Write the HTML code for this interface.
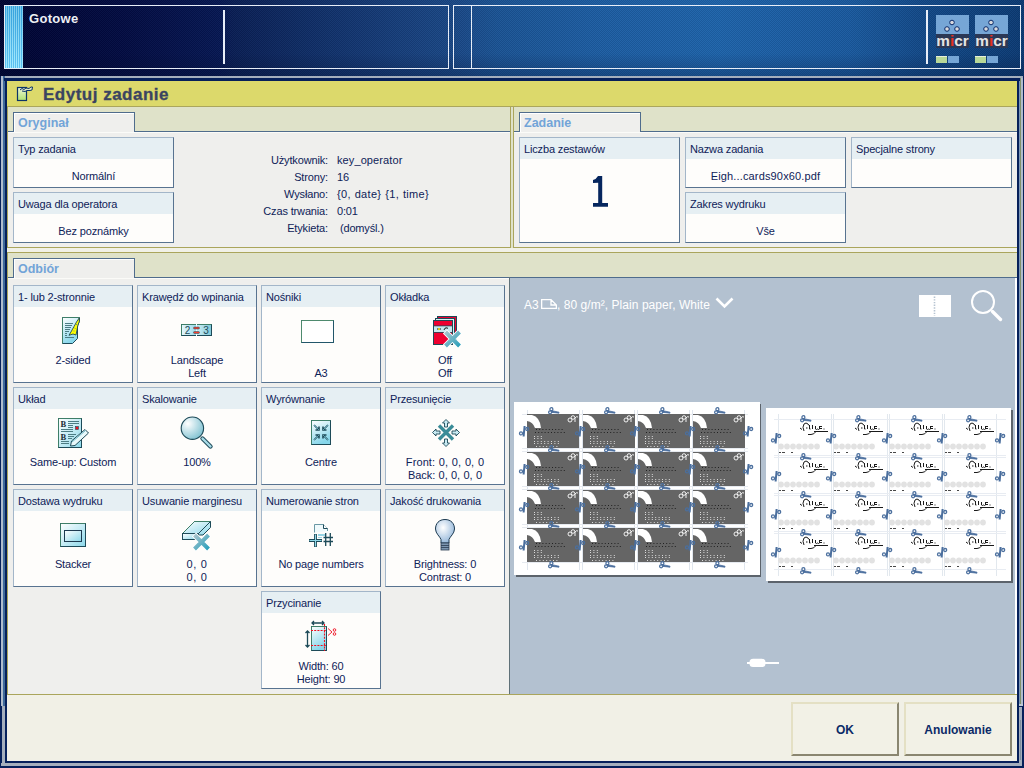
<!DOCTYPE html><html><head><meta charset="utf-8"><style>
*{margin:0;padding:0;box-sizing:border-box}
html,body{width:1024px;height:768px;overflow:hidden;background:#010a3a;font-family:"Liberation Sans",sans-serif;}
.a{position:absolute}
svg{position:absolute;overflow:visible}
.wl{position:absolute;background:#e6ecf6}
.t{position:absolute;font-size:11px;color:#0e2258;white-space:nowrap;line-height:13px;letter-spacing:-0.15px}
.c{text-align:center}
.box{position:absolute;border:1px solid;border-color:#a3b6c9 #587390 #587390 #a3b6c9;background:#fefdfb}
.hd{position:absolute;left:0;top:0;right:0;height:21px;background:#e6eff3}
.tab{position:absolute;height:20px;width:122px;border:1px solid #4f6c8c;border-bottom:none;background:#efefed}
.tab i{position:absolute;left:0;top:0;right:0;bottom:0;border-left:1px solid #fff;border-top:1px solid #fff}
.tab span{position:absolute;left:4px;top:3px;font-size:12.5px;font-weight:bold;color:#72a4d8;line-height:14px}
</style></head><body>
<div class="a" style="left:0;top:0;width:1024px;height:76px;background:linear-gradient(90deg,#00042f 0px,#000433 30px,#020a3e 120px,#061650 220px,#0a1e52 235px,#12336c 340px,#1a4784 450px,#1b5494 500px,#1d5ea2 600px,#1e64aa 720px,#1a5a9e 850px,#134a88 920px,#0c3a72 1024px)"></div>
<div class="a" style="left:0;top:0;width:1024px;height:76px;background:repeating-conic-gradient(rgba(0,8,40,0.10) 0 25%,rgba(160,200,255,0.05) 0 50%);background-size:2px 2px"></div>
<div class="a" style="left:0;top:0;width:1024px;height:76px;background:linear-gradient(180deg,rgba(0,0,0,0) 0%,rgba(0,0,0,0) 70%,rgba(0,10,40,0.25) 100%)"></div>
<div class="a" style="left:4px;top:5px;width:445px;height:1px;background:#e8eef8;"></div>
<div class="a" style="left:4px;top:68px;width:445px;height:1px;background:#e8eef8;"></div>
<div class="a" style="left:4px;top:5px;width:1px;height:64px;background:#e8eef8;"></div>
<div class="a" style="left:448px;top:5px;width:1px;height:64px;background:#e8eef8;"></div>
<div class="a" style="left:5px;top:6px;width:18px;height:62px;background:repeating-linear-gradient(90deg,#3fb6ee 0px,#3fb6ee 1px,#92e6ff 1px,#92e6ff 2px)"></div>
<div class="a" style="left:5px;top:6px;width:18px;height:62px;background:linear-gradient(180deg,rgba(0,40,120,0.15),rgba(255,255,255,0.15))"></div>
<div class="t" style="left:29px;top:12px;font-size:13px;color:#eef0f4;font-weight:bold;letter-spacing:0.3px">Gotowe</div>
<div class="a" style="left:223px;top:10px;width:2px;height:54px;background:#e8eef8;"></div>
<div class="a" style="left:453px;top:5px;width:568px;height:1px;background:#e8eef8;"></div>
<div class="a" style="left:453px;top:68px;width:568px;height:1px;background:#e8eef8;"></div>
<div class="a" style="left:453px;top:5px;width:1px;height:64px;background:#e8eef8;"></div>
<div class="a" style="left:471px;top:5px;width:1px;height:64px;background:#e8eef8;"></div>
<div class="a" style="left:1020px;top:5px;width:1px;height:64px;background:#e8eef8;"></div>
<div class="a" style="left:926px;top:10px;width:2px;height:54px;background:#e8eef8;"></div>
<svg style="left:936px;top:15px" width="34" height="50" viewBox="0 0 34 50">
<rect x="0" y="0" width="33" height="19" fill="#76a6d6"/>
<rect x="0" y="19" width="33" height="14" fill="#2b3856"/>
<g fill="#d8d8dc" stroke="#0a2a6a" stroke-width="1">
<circle cx="16" cy="7.5" r="2.3"/><circle cx="11" cy="14" r="2.3"/><circle cx="21" cy="14" r="2.3"/></g>
<text x="0.3" y="31" textLength="32.4" lengthAdjust="spacingAndGlyphs" font-family="Liberation Sans" font-weight="bold" font-size="14.5" fill="#e4e4e4">m<tspan fill="#e83020">i</tspan>cr</text>
<rect x="0" y="41" width="11" height="7" fill="#b8d898"/><rect x="0" y="41" width="11" height="1" fill="#e8f0d8"/>
<rect x="12" y="41" width="11" height="7" fill="#76a6d6"/>
</svg>
<svg style="left:975px;top:15px" width="34" height="50" viewBox="0 0 34 50">
<rect x="0" y="0" width="33" height="19" fill="#76a6d6"/>
<rect x="0" y="19" width="33" height="14" fill="#2b3856"/>
<g fill="#d8d8dc" stroke="#0a2a6a" stroke-width="1">
<circle cx="16" cy="7.5" r="2.3"/><circle cx="11" cy="14" r="2.3"/><circle cx="21" cy="14" r="2.3"/></g>
<text x="0.3" y="31" textLength="32.4" lengthAdjust="spacingAndGlyphs" font-family="Liberation Sans" font-weight="bold" font-size="14.5" fill="#e4e4e4">m<tspan fill="#e83020">i</tspan>cr</text>
<rect x="0" y="41" width="11" height="7" fill="#b8d898"/><rect x="0" y="41" width="11" height="1" fill="#e8f0d8"/>
<rect x="12" y="41" width="11" height="7" fill="#76a6d6"/>
</svg>
<div class="a" style="left:0px;top:76px;width:1024px;height:692px;background:#06205a;"></div>
<div class="a" style="left:1px;top:76px;width:1022px;height:2px;background:#a4aebc;"></div>
<div class="a" style="left:1px;top:76px;width:4px;height:630px;background:#3f6a9a;"></div>
<div class="a" style="left:1px;top:76px;width:2px;height:630px;background:#b0bccb;"></div>
<div class="a" style="left:2px;top:706px;width:3px;height:59px;background:#a4aebc;"></div>
<div class="a" style="left:1px;top:763px;width:1021px;height:3px;background:#a4aebc;"></div>
<div class="a" style="left:1px;top:763px;width:1021px;height:2px;background:#a4aebc;"></div>
<div class="a" style="left:1019px;top:78px;width:1px;height:627px;background:#7a96b8;"></div>
<div class="a" style="left:1020px;top:78px;width:1px;height:627px;background:#80906a;"></div>
<div class="a" style="left:1021px;top:78px;width:2px;height:627px;background:#b0bccb;"></div>
<div class="a" style="left:1019px;top:704px;width:4px;height:2px;background:#c0cad6;"></div>
<div class="a" style="left:1019px;top:707px;width:3px;height:56px;background:#a4aebc;"></div>
<div class="a" style="left:1020px;top:720px;width:1px;height:40px;background:#8090a0;"></div>
<div class="a" style="left:4px;top:78px;width:1016px;height:3px;background:#06205a;"></div>
<div class="a" style="left:5px;top:78px;width:2px;height:683px;background:#06205a;"></div>
<div class="a" style="left:7px;top:81px;width:1010px;height:680px;background:#dfe2c9;"></div>
<div class="a" style="left:7px;top:81px;width:1010px;height:25px;background:#dcd96b;"></div>
<div class="a" style="left:7px;top:106px;width:1010px;height:1px;background:#aba65c;"></div>
<svg style="left:16px;top:85px" width="20" height="18" viewBox="0 0 20 18">
<defs><linearGradient id="gti" x1="0" y1="0" x2="0" y2="1"><stop offset="0" stop-color="#f0f6d8"/><stop offset="1" stop-color="#b0e070"/></linearGradient></defs>
<rect x="1.5" y="2.5" width="9" height="13" fill="url(#gti)" stroke="#0c3468" stroke-width="1.2"/>
<path d="M4,5 L6,3.5 L8,4.5 L10,3 L13,3.5 L15,2 L16.5,2 L16,5 L14,5.5 L11,5.5 L9,6.5 L6,6" fill="#dfe8c8" stroke="#0c3468" stroke-width="1"/>
</svg>
<div class="t" style="left:43px;top:85px;font-size:17px;color:#3a4461;font-weight:bold;letter-spacing:0.5px;line-height:20px;-webkit-text-stroke:0.3px #3a4461">Edytuj zadanie</div>
<div class="a" style="left:7px;top:107px;width:1px;height:654px;background:#aaa55c;"></div>
<div class="a" style="left:8px;top:131px;width:502px;height:116px;background:#efefed;"></div>
<div class="a" style="left:8px;top:131px;width:6px;height:1px;background:#4f6c8c;"></div>
<div class="a" style="left:134px;top:131px;width:376px;height:1px;background:#4f6c8c;"></div>
<div class="a" style="left:8px;top:132px;width:502px;height:1px;background:#fbfbf8;"></div>
<div class="tab" style="left:13px;top:112px"><i></i><span>Oryginał</span></div>
<div class="a" style="left:510px;top:107px;width:1px;height:141px;background:#aaa55c;"></div>
<div class="a" style="left:7px;top:247px;width:504px;height:1px;background:#aaa55c;"></div>
<div class="a" style="left:514px;top:131px;width:503px;height:116px;background:#efefed;"></div>
<div class="a" style="left:514px;top:131px;width:5px;height:1px;background:#4f6c8c;"></div>
<div class="a" style="left:641px;top:131px;width:376px;height:1px;background:#4f6c8c;"></div>
<div class="a" style="left:514px;top:132px;width:503px;height:1px;background:#fbfbf8;"></div>
<div class="tab" style="left:519px;top:112px"><i></i><span>Zadanie</span></div>
<div class="a" style="left:513px;top:107px;width:1px;height:141px;background:#aaa55c;"></div>
<div class="a" style="left:513px;top:247px;width:504px;height:1px;background:#aaa55c;"></div>
<div class="a" style="left:7px;top:248px;width:1010px;height:4px;background:#f1f1e7;"></div>
<div class="a" style="left:7px;top:252px;width:1010px;height:1px;background:#aaa55c;"></div>
<div class="box" style="left:13px;top:137px;width:161px;height:51px"><div class="hd"></div></div>
<div class="t" style="left:18px;top:143px;font-size:11px;color:#0e2258;">Typ zadania</div>
<div class="t" style="left:13px;top:170px;font-size:11px;color:#0e2258;width:161px;text-align:center">Normální</div>
<div class="box" style="left:13px;top:192px;width:161px;height:51px"><div class="hd"></div></div>
<div class="t" style="left:18px;top:198px;font-size:11px;color:#0e2258;">Uwaga dla operatora</div>
<div class="t" style="left:13px;top:225px;font-size:11px;color:#0e2258;width:161px;text-align:center">Bez poznámky</div>
<div class="t" style="left:200px;top:154px;font-size:11px;color:#0e2258;width:128px;text-align:right">Użytkownik:</div>
<div class="t" style="left:337px;top:154px;font-size:11px;color:#0e2258;"><span style="letter-spacing:0.1px">key_operator</span></div>
<div class="t" style="left:200px;top:171px;font-size:11px;color:#0e2258;width:128px;text-align:right">Strony:</div>
<div class="t" style="left:337px;top:171px;font-size:11px;color:#0e2258;">16</div>
<div class="t" style="left:200px;top:188px;font-size:11px;color:#0e2258;width:128px;text-align:right">Wysłano:</div>
<div class="t" style="left:337px;top:188px;font-size:11px;color:#0e2258;"><span style="letter-spacing:0.3px;word-spacing:0.6px">{0, date} {1, time}</span></div>
<div class="t" style="left:200px;top:205px;font-size:11px;color:#0e2258;width:128px;text-align:right">Czas trwania:</div>
<div class="t" style="left:337px;top:205px;font-size:11px;color:#0e2258;">0:01</div>
<div class="t" style="left:200px;top:222px;font-size:11px;color:#0e2258;width:128px;text-align:right">Etykieta:</div>
<div class="t" style="left:337px;top:222px;font-size:11px;color:#0e2258;">&nbsp;(domyśl.)</div>
<div class="box" style="left:519px;top:137px;width:161px;height:106px"><div class="hd"></div></div>
<div class="t" style="left:524px;top:143px;font-size:11px;color:#0e2258;">Liczba zestawów</div>
<svg style="left:590px;top:174px" width="20" height="36" viewBox="0 0 20 36">
<path d="M8,2 H12.2 V29 H18 V32.7 H3 V29 H8.2 V8.8 L3,9 V6 Q6,5.5 8,2 Z" fill="#06265e"/>
</svg>
<div class="box" style="left:685px;top:137px;width:161px;height:51px"><div class="hd"></div></div>
<div class="t" style="left:690px;top:143px;font-size:11px;color:#0e2258;">Nazwa zadania</div>
<div class="t" style="left:685px;top:170px;font-size:11px;color:#0e2258;width:161px;text-align:center;letter-spacing:0.15px">Eigh...cards90x60.pdf</div>
<div class="box" style="left:685px;top:192px;width:161px;height:51px"><div class="hd"></div></div>
<div class="t" style="left:690px;top:198px;font-size:11px;color:#0e2258;">Zakres wydruku</div>
<div class="t" style="left:685px;top:225px;font-size:11px;color:#0e2258;width:161px;text-align:center">Vše</div>
<div class="box" style="left:851px;top:137px;width:161px;height:51px"><div class="hd"></div></div>
<div class="t" style="left:856px;top:143px;font-size:11px;color:#0e2258;">Specjalne strony</div>
<div class="a" style="left:8px;top:277px;width:502px;height:417px;background:#efefed;"></div>
<div class="a" style="left:8px;top:277px;width:6px;height:1px;background:#4f6c8c;"></div>
<div class="a" style="left:134px;top:277px;width:376px;height:1px;background:#4f6c8c;"></div>
<div class="a" style="left:510px;top:277px;width:507px;height:1px;background:#4f6c8c;"></div>
<div class="a" style="left:8px;top:278px;width:502px;height:1px;background:#fbfbf8;"></div>
<div class="tab" style="left:13px;top:258px"><i></i><span>Odbiór</span></div>
<div class="a" style="left:7px;top:694px;width:1010px;height:1px;background:#aaa55c;"></div>
<div class="a" style="left:510px;top:278px;width:505px;height:416px;background:#b3c1d0;"></div>
<div class="a" style="left:509px;top:277px;width:1px;height:417px;background:#5f7179;"></div>
<div class="a" style="left:1015px;top:278px;width:2px;height:416px;background:#ffffff;"></div>
<div class="a" style="left:7px;top:695px;width:1010px;height:66px;background:#f1f0e6;"></div>
<div class="box" style="left:13px;top:285px;width:120px;height:98px"><div class="hd"></div></div>
<div class="t" style="left:18px;top:291px;font-size:11px;color:#0e2258;">1- lub 2-stronnie</div>
<div class="t" style="left:13px;top:354px;font-size:11px;color:#0e2258;width:120px;text-align:center">2-sided</div>
<div class="box" style="left:137px;top:285px;width:120px;height:98px"><div class="hd"></div></div>
<div class="t" style="left:142px;top:291px;font-size:11px;color:#0e2258;">Krawędź do wpinania</div>
<div class="t" style="left:137px;top:354px;font-size:11px;color:#0e2258;width:120px;text-align:center">Landscape</div>
<div class="t" style="left:137px;top:367px;font-size:11px;color:#0e2258;width:120px;text-align:center">Left</div>
<div class="box" style="left:261px;top:285px;width:120px;height:98px"><div class="hd"></div></div>
<div class="t" style="left:266px;top:291px;font-size:11px;color:#0e2258;">Nośniki</div>
<div class="t" style="left:261px;top:367px;font-size:11px;color:#0e2258;width:120px;text-align:center">A3</div>
<div class="box" style="left:385px;top:285px;width:120px;height:98px"><div class="hd"></div></div>
<div class="t" style="left:390px;top:291px;font-size:11px;color:#0e2258;">Okładka</div>
<div class="t" style="left:385px;top:354px;font-size:11px;color:#0e2258;width:120px;text-align:center">Off</div>
<div class="t" style="left:385px;top:367px;font-size:11px;color:#0e2258;width:120px;text-align:center">Off</div>
<div class="box" style="left:13px;top:387px;width:120px;height:98px"><div class="hd"></div></div>
<div class="t" style="left:18px;top:393px;font-size:11px;color:#0e2258;">Układ</div>
<div class="t" style="left:13px;top:456px;font-size:11px;color:#0e2258;width:120px;text-align:center">Same-up: Custom</div>
<div class="box" style="left:137px;top:387px;width:120px;height:98px"><div class="hd"></div></div>
<div class="t" style="left:142px;top:393px;font-size:11px;color:#0e2258;">Skalowanie</div>
<div class="t" style="left:137px;top:456px;font-size:11px;color:#0e2258;width:120px;text-align:center">100%</div>
<div class="box" style="left:261px;top:387px;width:120px;height:98px"><div class="hd"></div></div>
<div class="t" style="left:266px;top:393px;font-size:11px;color:#0e2258;">Wyrównanie</div>
<div class="t" style="left:261px;top:456px;font-size:11px;color:#0e2258;width:120px;text-align:center">Centre</div>
<div class="box" style="left:385px;top:387px;width:120px;height:98px"><div class="hd"></div></div>
<div class="t" style="left:390px;top:393px;font-size:11px;color:#0e2258;">Przesunięcie</div>
<div class="t" style="left:385px;top:456px;font-size:11px;color:#0e2258;width:120px;text-align:center"><span style="letter-spacing:0.1px;word-spacing:0.5px">Front: 0, 0, 0, 0</span></div>
<div class="t" style="left:385px;top:469px;font-size:11px;color:#0e2258;width:120px;text-align:center"><span style="letter-spacing:-0.05px;word-spacing:0.4px">Back: 0, 0, 0, 0</span></div>
<div class="box" style="left:13px;top:489px;width:120px;height:98px"><div class="hd"></div></div>
<div class="t" style="left:18px;top:495px;font-size:11px;color:#0e2258;">Dostawa wydruku</div>
<div class="t" style="left:13px;top:558px;font-size:11px;color:#0e2258;width:120px;text-align:center">Stacker</div>
<div class="box" style="left:137px;top:489px;width:120px;height:98px"><div class="hd"></div></div>
<div class="t" style="left:142px;top:495px;font-size:11px;color:#0e2258;">Usuwanie marginesu</div>
<div class="t" style="left:137px;top:558px;font-size:11px;color:#0e2258;width:120px;text-align:center"><span style="letter-spacing:0.5px;word-spacing:0.5px">0, 0</span></div>
<div class="t" style="left:137px;top:571px;font-size:11px;color:#0e2258;width:120px;text-align:center"><span style="letter-spacing:0.5px;word-spacing:0.5px">0, 0</span></div>
<div class="box" style="left:261px;top:489px;width:120px;height:98px"><div class="hd"></div></div>
<div class="t" style="left:266px;top:495px;font-size:11px;color:#0e2258;">Numerowanie stron</div>
<div class="t" style="left:261px;top:558px;font-size:11px;color:#0e2258;width:120px;text-align:center">No page numbers</div>
<div class="box" style="left:385px;top:489px;width:120px;height:98px"><div class="hd"></div></div>
<div class="t" style="left:390px;top:495px;font-size:11px;color:#0e2258;">Jakość drukowania</div>
<div class="t" style="left:385px;top:558px;font-size:11px;color:#0e2258;width:120px;text-align:center">Brightness: 0</div>
<div class="t" style="left:385px;top:571px;font-size:11px;color:#0e2258;width:120px;text-align:center">Contrast: 0</div>
<div class="box" style="left:261px;top:591px;width:120px;height:98px"><div class="hd"></div></div>
<div class="t" style="left:266px;top:597px;font-size:11px;color:#0e2258;">Przycinanie</div>
<div class="t" style="left:261px;top:660px;font-size:11px;color:#0e2258;width:120px;text-align:center">Width: 60</div>
<div class="t" style="left:261px;top:673px;font-size:11px;color:#0e2258;width:120px;text-align:center">Height: 90</div>
<svg style="left:0;top:0" width="0" height="0"><defs>
<linearGradient id="gc" x1="0" y1="0" x2="0.4" y2="1"><stop offset="0" stop-color="#ffffff"/><stop offset="1" stop-color="#86d6ea"/></linearGradient>
<linearGradient id="gc2" x1="0" y1="0" x2="1" y2="1"><stop offset="0" stop-color="#ffffff"/><stop offset="1" stop-color="#8cd8ea"/></linearGradient>
<linearGradient id="gx" x1="0" y1="0" x2="1" y2="1"><stop offset="0" stop-color="#a8c4cc"/><stop offset="1" stop-color="#2aa0bc"/></linearGradient>
<radialGradient id="gm" cx="0.3" cy="0.3" r="0.8"><stop offset="0" stop-color="#ffffff"/><stop offset="1" stop-color="#7cc0d0"/></radialGradient>
<radialGradient id="gb" cx="0.4" cy="0.35" r="0.7"><stop offset="0" stop-color="#ffffff"/><stop offset="1" stop-color="#90b4d8"/></radialGradient>
</defs></svg>
<svg style="left:62px;top:317px" width="20" height="28" viewBox="0 0 20 28">
<path d="M0.5,0.5 H17.5 V4 L15.5,9 V21.5 L10.5,26.5 H0.5 Z" fill="url(#gc)" stroke="#1d4a58"/>
<path d="M0.5,26.5 V0.5 H17.5" fill="none" stroke="#3e7e68"/>
<g fill="#4c7c84"><rect x="3" y="6" width="8" height="1"/><rect x="3" y="8" width="7" height="1"/><rect x="3" y="10" width="6" height="1"/><rect x="3" y="12" width="5" height="1"/><rect x="3" y="14" width="4" height="1"/><rect x="3" y="16" width="2" height="1"/><rect x="3" y="18" width="2" height="1"/><rect x="3" y="20" width="9" height="1"/></g>
<path d="M17.2,1 L17.3,4.5 L15.8,8.5 L15.2,12 L14.6,15 L14,18 L11,17 L7,18.3 L9.5,14 L12,9.5 L14.5,5 Z" fill="#ffff00" stroke="#1d4a58" stroke-width="0.9" stroke-linejoin="bevel"/>
<path d="M14,7 l1,1 M12.5,11 l1,0.5 M11.5,14 l1,0" stroke="#4c7c84" stroke-width="0.8"/>
</svg>
<svg style="left:181px;top:324px" width="32" height="13" viewBox="0 0 32 13">
<defs><linearGradient id="gbd" x1="0" y1="0" x2="1" y2="0"><stop offset="0" stop-color="#e8f8fc"/><stop offset="0.5" stop-color="#98d8e8"/><stop offset="0.55" stop-color="#c8ecf4"/><stop offset="1" stop-color="#80c8d8"/></linearGradient></defs>
<rect x="0.5" y="0.5" width="30" height="11" fill="url(#gbd)" stroke="#1d4a58"/>
<path d="M0.5,11.5 V0.5 H30.5" fill="none" stroke="#3e7e68"/>
<rect x="15" y="0" width="1" height="12" fill="#f4fcff"/>
<text x="6.5" y="10" font-family="Liberation Sans" font-size="10" fill="#1d4a58" text-anchor="middle">2</text>
<text x="25" y="10" font-family="Liberation Sans" font-size="10" fill="#1d4a58" text-anchor="middle">3</text>
<rect x="12.5" y="3" width="6" height="2" rx="1" fill="#f04030" stroke="#1d4a58" stroke-width="0.5"/>
<rect x="12.5" y="7.5" width="6" height="2" rx="1" fill="#f04030" stroke="#1d4a58" stroke-width="0.5"/>
</svg>
<svg style="left:301px;top:320px" width="34" height="24" viewBox="0 0 34 24">
<rect x="0.5" y="0.5" width="32" height="22" fill="#ffffff" stroke="#22566a"/>
<path d="M0.5,22.5 V0.5 H32.5" fill="none" stroke="#4e8a6e"/>
</svg>
<svg style="left:433px;top:316px" width="30" height="32" viewBox="0 0 30 32">
<rect x="4.5" y="0.5" width="19" height="24" fill="#ee0030" stroke="#1d4a58"/>
<rect x="2.5" y="2.5" width="19" height="24" fill="#d8f0f4" stroke="#1d4a58"/>
<rect x="0.5" y="4.5" width="19" height="24" fill="#ee0030" stroke="#1d4a58"/>
<rect x="1" y="10" width="18" height="6" fill="#c8e8ef"/>
<rect x="1" y="9.5" width="18" height="0.8" fill="#1d4a58"/><rect x="1" y="16" width="18" height="0.8" fill="#1d4a58"/>
<path d="M4,13 H8" stroke="#000" stroke-width="0.9"/><circle cx="6" cy="13" r="1" fill="#ffe000"/>
<path d="M11,14 Q11.5,11.5 14,11.8 L15,12.5" fill="none" stroke="#000" stroke-width="0.9"/>
<path d="M12,15.5 L27,30.5 M27,15.5 L12,30.5" stroke="#ffffff" stroke-width="6"/>
<path d="M12.5,16 L26.5,30 M26.5,16 L12.5,30" stroke="url(#gx)" stroke-width="4"/>
</svg>
<svg style="left:58px;top:418px" width="32" height="32" viewBox="0 0 32 32">
<rect x="0.5" y="0.5" width="23" height="29" fill="url(#gc2)" stroke="#1d4a58"/>
<path d="M0.5,29.5 V0.5 H23.5" fill="none" stroke="#3e7e68"/>
<text x="2.6" y="9.2" font-family="Liberation Serif" font-weight="bold" font-size="8.5" fill="#1c2c34">B</text>
<text x="2.6" y="22.2" font-family="Liberation Serif" font-weight="bold" font-size="8.5" fill="#1c2c34">B</text>
<g fill="#4c7c84"><rect x="10" y="3" width="11" height="1"/><rect x="10" y="5" width="11" height="1"/><rect x="10" y="7" width="5" height="1"/><rect x="10" y="9" width="5" height="1"/><rect x="3" y="11" width="12" height="1"/><rect x="3" y="13" width="12" height="1"/>
<rect x="10" y="16" width="8" height="1"/><rect x="10" y="18" width="6" height="1"/><rect x="10" y="20" width="4" height="1"/><rect x="3" y="23" width="8" height="1"/><rect x="3" y="25" width="8" height="1"/></g>
<rect x="17.5" y="8.5" width="3" height="3" fill="#ee1020" stroke="#1d4a58" stroke-width="0.6"/>
<path d="M12.5,28 L13.5,23 L27,11.5 L30.5,15 L17,27.5 Z" fill="#e8f8fa" stroke="#1d4a58" stroke-width="1"/>
<path d="M14,24 L27.5,12.5" stroke="#6cb8c8" stroke-width="1"/>
</svg>
<svg style="left:180px;top:416px" width="34" height="34" viewBox="0 0 34 34">
<path d="M22.5,22.5 L30.5,30.5" stroke="#1d4a58" stroke-width="4.4" stroke-linecap="round"/>
<path d="M22.5,22.5 L30.5,30.5" stroke="#a8dce8" stroke-width="2.4" stroke-linecap="round"/>
<circle cx="12.4" cy="12.2" r="11.2" fill="url(#gm)" stroke="#1d4a58" stroke-width="1.1"/>
</svg>
<svg style="left:311px;top:420px" width="21" height="26" viewBox="0 0 21 26">
<rect x="0.5" y="0.5" width="19" height="24" fill="url(#gc)" stroke="#1d4a58"/>
<path d="M0.5,24.5 V0.5 H19.5" fill="none" stroke="#3e7e68"/>
<g stroke="#1d4a58" stroke-width="1.6" fill="none">
<path d="M3,5 L8,10 M8,6.5 V10 H4.5"/><path d="M17,5 L12,10 M12,6.5 V10 H15.5"/>
<path d="M3,20 L8,15 M8,18.5 V15 H4.5"/><path d="M17,20 L12,15 M12,18.5 V15 H15.5"/></g>
<g stroke="#7cc8d8" stroke-width="0.7" fill="none">
<path d="M3,5 L8,10"/><path d="M17,5 L12,10"/><path d="M3,20 L8,15"/><path d="M17,20 L12,15"/></g>
</svg>
<svg style="left:432px;top:419px" width="28" height="28" viewBox="0 0 28 28">
<g fill="#c8eaf2" stroke="#1d4a58" stroke-width="0.9">
<path d="M14,0.5 L17.5,4 L15.5,4 L15.5,8 L12.5,8 L12.5,4 L10.5,4 Z"/>
<path d="M14,27.5 L17.5,24 L15.5,24 L15.5,20 L12.5,20 L12.5,24 L10.5,24 Z"/>
<path d="M0.5,13.5 L4,10 L4,12 L8,12 L8,15 L4,15 L4,17 Z"/>
<path d="M27.5,13.5 L24,10 L24,12 L20,12 L20,15 L24,15 L24,17 Z"/></g>
<path d="M7,6.5 L21,20.5 M21,6.5 L7,20.5" stroke="#3a8c98" stroke-width="3.4"/>
</svg>
<svg style="left:60px;top:523px" width="27" height="25" viewBox="0 0 27 25">
<rect x="0.5" y="0.5" width="25" height="23" fill="url(#gc2)" stroke="#1d4a58"/>
<path d="M0.5,23.5 V0.5 H25.5" fill="none" stroke="#3e7e68"/>
<rect x="4.5" y="7.5" width="17" height="11" fill="url(#gc2)" stroke="#1d3a50"/>
</svg>
<svg style="left:182px;top:521px" width="31" height="30" viewBox="0 0 31 30">
<path d="M0.5,12.5 L12.5,0.5 H28.5 V6.5 L21,14 L0.5,14 Z" fill="url(#gc2)" stroke="#1d4a58"/>
<path d="M0.5,12.5 L12.5,0.5 H28.5" fill="none" stroke="#3e7e68"/>
<path d="M28.5,0.5 L16.5,12.5 H0.5" fill="none" stroke="#1d4a58"/>
<rect x="0.5" y="12.5" width="16" height="6" fill="url(#gc2)" stroke="#1d4a58"/>
<path d="M12,13.5 L27,28.5 M27,13.5 L12,28.5" stroke="#ffffff" stroke-width="6"/>
<path d="M12.5,14 L26.5,28 M26.5,14 L12.5,28" stroke="url(#gx)" stroke-width="4"/>
</svg>
<svg style="left:309px;top:524px" width="25" height="24" viewBox="0 0 25 24">
<path d="M5.5,8.5 V0.5 H14.5 L18.5,4.5 V7" fill="#f0fafc" stroke="#6a98a4"/>
<path d="M14.5,0.5 V4.5 H18.5" fill="#ffffff" stroke="#1d4a58"/>
<rect x="9" y="10" width="8" height="2" fill="#98d4e4"/><rect x="9" y="13" width="4" height="1" fill="#98d4e4"/>
<path d="M6.5,10 V23 M0,16.5 H13" stroke="#1d4a58" stroke-width="2.8"/>
<path d="M6.5,10.5 V22.5 M0.5,16.5 H12.5" stroke="#90d8e8" stroke-width="1"/>
<path d="M16.7,9 V22 M21.3,9 V22 M14.5,13.5 H24 M14.5,17.5 H24" stroke="#1d4a58" stroke-width="1.3"/>
</svg>
<svg style="left:434px;top:519px" width="22" height="32" viewBox="0 0 22 32">
<path d="M11,0.5 C17,0.5 20.5,4.5 20.5,10 C20.5,14.5 16,17.5 15,20.5 V24 H7 V20.5 C6,17.5 1.5,14.5 1.5,10 C1.5,4.5 5,0.5 11,0.5 Z" fill="url(#gb)" stroke="#1d3a50" stroke-width="1"/>
<rect x="7" y="24" width="8" height="7" fill="#7c96b0" stroke="#2a3a50" stroke-width="0.8"/>
<path d="M7,26.5 H15 M7,28.5 H15" stroke="#2a3a50" stroke-width="0.8"/>
</svg>
<svg style="left:304px;top:620px" width="34" height="32" viewBox="0 0 34 32">
<rect x="7.5" y="6.5" width="15" height="24" fill="url(#gc)" stroke="#1d4a58"/>
<path d="M7.5,30.5 V6.5 H22.5" fill="none" stroke="#3e7e68"/>
<path d="M7,10.5 H23 M7,25.5 H23 M20.5,4 V31" stroke="#ee1020" stroke-width="1.1" stroke-dasharray="2,1.2"/>
<path d="M8,3 H20 M10,1 L8,3 L10,5 M18,1 L20,3 L18,5" stroke="#1d4a58" stroke-width="1.3" fill="none"/>
<path d="M3.5,11 V27 M1.5,13 L3.5,11 L5.5,13 M1.5,25 L3.5,27 L5.5,25" stroke="#1d4a58" stroke-width="1.3" fill="none"/>
<path d="M24,8.5 L28,12 L24,15.5" stroke="#ee1020" stroke-width="0.9" fill="none"/>
<circle cx="30.5" cy="10" r="1.3" fill="none" stroke="#ee1020" stroke-width="0.9"/><circle cx="30.5" cy="14" r="1.3" fill="none" stroke="#ee1020" stroke-width="0.9"/>
</svg>
<div class="t" style="left:524px;top:298px;font-size:12px;color:#ffffff;line-height:14px;letter-spacing:0">A3</div>
<div class="t" style="left:557px;top:298px;font-size:12px;color:#ffffff;line-height:14px;letter-spacing:0.05px">, 80 g/m², Plain paper, White</div>
<svg style="left:541px;top:299px" width="16" height="11" viewBox="0 0 16 11">
<path d="M0.65,0.65 H10 L15.35,6 V9.35 H0.65 Z M10,0.65 V6 H15.35" fill="none" stroke="#ffffff" stroke-width="1.3"/>
</svg>
<svg style="left:715px;top:297px" width="20" height="12" viewBox="0 0 20 12">
<path d="M1.5,1.5 L9.5,9.5 L17.5,1.5" fill="none" stroke="#ffffff" stroke-width="2.6"/>
</svg>
<svg style="left:919px;top:295px" width="33" height="23" viewBox="0 0 33 23">
<rect x="0" y="0" width="32" height="22" fill="#ffffff"/>
<path d="M15.5,1.5 V21" stroke="#b6c3d1" stroke-width="1.6" stroke-dasharray="1.4,1.3"/>
</svg>
<svg style="left:968px;top:288px" width="36" height="36" viewBox="0 0 36 36">
<circle cx="15" cy="14" r="11" fill="none" stroke="#ffffff" stroke-width="2"/>
<path d="M24.5,23.5 L32.5,31.5" stroke="#ffffff" stroke-width="3.4" stroke-linecap="round"/>
</svg>
<svg style="left:746px;top:657px" width="36" height="12" viewBox="0 0 36 12">
<rect x="1" y="5" width="32" height="2" fill="#ffffff"/>
<rect x="3.5" y="1.8" width="16" height="8.3" rx="3.6" fill="#ffffff"/>
</svg>
<div class="a" style="left:760px;top:404px;width:1px;height:173px;background:#5c636b"></div>
<div class="a" style="left:516px;top:575px;width:245px;height:2px;background:#5c636b"></div>
<div class="a" style="left:514px;top:402px;width:246px;height:173px;background:#ffffff"></div>
<svg style="left:514px;top:402px" width="246" height="174" viewBox="0 0 246 174"><path d="M13.5,8 V168" stroke="#e0e6ee" stroke-width="1"/><path d="M65.5,8 V168" stroke="#e0e6ee" stroke-width="1"/><path d="M68.5,8 V168" stroke="#e0e6ee" stroke-width="1"/><path d="M120.5,8 V168" stroke="#e0e6ee" stroke-width="1"/><path d="M123.5,8 V168" stroke="#e0e6ee" stroke-width="1"/><path d="M175.5,8 V168" stroke="#e0e6ee" stroke-width="1"/><path d="M178.5,8 V168" stroke="#e0e6ee" stroke-width="1"/><path d="M230.5,8 V168" stroke="#e0e6ee" stroke-width="1"/><path d="M8,12.5 H234" stroke="#e6eaf0" stroke-width="1"/><path d="M8,46.5 H234" stroke="#e6eaf0" stroke-width="1"/><path d="M8,49.5 H234" stroke="#e6eaf0" stroke-width="1"/><path d="M8,84.5 H234" stroke="#e6eaf0" stroke-width="1"/><path d="M8,87.5 H234" stroke="#e6eaf0" stroke-width="1"/><path d="M8,122.5 H234" stroke="#e6eaf0" stroke-width="1"/><path d="M8,125.5 H234" stroke="#e6eaf0" stroke-width="1"/><path d="M8,160.5 H234" stroke="#e6eaf0" stroke-width="1"/><rect x="13" y="12" width="52" height="34" fill="#656565"/><path d="M13,13 H18 Q26,15 27,26 H21 Q19,20 13,19 Z" fill="#ffffff"/><g stroke="#ffffff" stroke-width="0.9" fill="none"><circle cx="56" cy="18" r="2"/><circle cx="59" cy="15.5" r="1.8"/><path d="M61,20 v-4 q1,-2 3,-1"/></g><path d="M22,27.5 h28 M21,30.5 h32" stroke="#1a1a1a" stroke-width="0.9" stroke-dasharray="1,2.2"/><path d="M20,34.5 h8 M20,36.5 h8 M20,39.5 h26 M20,41.5 h27 M22,44.5 h23" stroke="#ffffff" stroke-width="0.9" stroke-dasharray="1,2.4" opacity="0.85"/><rect x="69" y="12" width="52" height="34" fill="#656565"/><path d="M69,13 H74 Q82,15 83,26 H77 Q75,20 69,19 Z" fill="#ffffff"/><g stroke="#ffffff" stroke-width="0.9" fill="none"><circle cx="112" cy="18" r="2"/><circle cx="115" cy="15.5" r="1.8"/><path d="M117,20 v-4 q1,-2 3,-1"/></g><path d="M78,27.5 h28 M77,30.5 h32" stroke="#1a1a1a" stroke-width="0.9" stroke-dasharray="1,2.2"/><path d="M76,34.5 h8 M76,36.5 h8 M76,39.5 h26 M76,41.5 h27 M78,44.5 h23" stroke="#ffffff" stroke-width="0.9" stroke-dasharray="1,2.4" opacity="0.85"/><rect x="124" y="12" width="52" height="34" fill="#656565"/><path d="M124,13 H129 Q137,15 138,26 H132 Q130,20 124,19 Z" fill="#ffffff"/><g stroke="#ffffff" stroke-width="0.9" fill="none"><circle cx="167" cy="18" r="2"/><circle cx="170" cy="15.5" r="1.8"/><path d="M172,20 v-4 q1,-2 3,-1"/></g><path d="M133,27.5 h28 M132,30.5 h32" stroke="#1a1a1a" stroke-width="0.9" stroke-dasharray="1,2.2"/><path d="M131,34.5 h8 M131,36.5 h8 M131,39.5 h26 M131,41.5 h27 M133,44.5 h23" stroke="#ffffff" stroke-width="0.9" stroke-dasharray="1,2.4" opacity="0.85"/><rect x="179" y="12" width="52" height="34" fill="#656565"/><path d="M179,13 H184 Q192,15 193,26 H187 Q185,20 179,19 Z" fill="#ffffff"/><g stroke="#ffffff" stroke-width="0.9" fill="none"><circle cx="222" cy="18" r="2"/><circle cx="225" cy="15.5" r="1.8"/><path d="M227,20 v-4 q1,-2 3,-1"/></g><path d="M188,27.5 h28 M187,30.5 h32" stroke="#1a1a1a" stroke-width="0.9" stroke-dasharray="1,2.2"/><path d="M186,34.5 h8 M186,36.5 h8 M186,39.5 h26 M186,41.5 h27 M188,44.5 h23" stroke="#ffffff" stroke-width="0.9" stroke-dasharray="1,2.4" opacity="0.85"/><rect x="13" y="50" width="52" height="34" fill="#656565"/><path d="M13,51 H18 Q26,53 27,64 H21 Q19,58 13,57 Z" fill="#ffffff"/><g stroke="#ffffff" stroke-width="0.9" fill="none"><circle cx="56" cy="56" r="2"/><circle cx="59" cy="53.5" r="1.8"/><path d="M61,58 v-4 q1,-2 3,-1"/></g><path d="M22,65.5 h28 M21,68.5 h32" stroke="#1a1a1a" stroke-width="0.9" stroke-dasharray="1,2.2"/><path d="M20,72.5 h8 M20,74.5 h8 M20,77.5 h26 M20,79.5 h27 M22,82.5 h23" stroke="#ffffff" stroke-width="0.9" stroke-dasharray="1,2.4" opacity="0.85"/><rect x="69" y="50" width="52" height="34" fill="#656565"/><path d="M69,51 H74 Q82,53 83,64 H77 Q75,58 69,57 Z" fill="#ffffff"/><g stroke="#ffffff" stroke-width="0.9" fill="none"><circle cx="112" cy="56" r="2"/><circle cx="115" cy="53.5" r="1.8"/><path d="M117,58 v-4 q1,-2 3,-1"/></g><path d="M78,65.5 h28 M77,68.5 h32" stroke="#1a1a1a" stroke-width="0.9" stroke-dasharray="1,2.2"/><path d="M76,72.5 h8 M76,74.5 h8 M76,77.5 h26 M76,79.5 h27 M78,82.5 h23" stroke="#ffffff" stroke-width="0.9" stroke-dasharray="1,2.4" opacity="0.85"/><rect x="124" y="50" width="52" height="34" fill="#656565"/><path d="M124,51 H129 Q137,53 138,64 H132 Q130,58 124,57 Z" fill="#ffffff"/><g stroke="#ffffff" stroke-width="0.9" fill="none"><circle cx="167" cy="56" r="2"/><circle cx="170" cy="53.5" r="1.8"/><path d="M172,58 v-4 q1,-2 3,-1"/></g><path d="M133,65.5 h28 M132,68.5 h32" stroke="#1a1a1a" stroke-width="0.9" stroke-dasharray="1,2.2"/><path d="M131,72.5 h8 M131,74.5 h8 M131,77.5 h26 M131,79.5 h27 M133,82.5 h23" stroke="#ffffff" stroke-width="0.9" stroke-dasharray="1,2.4" opacity="0.85"/><rect x="179" y="50" width="52" height="34" fill="#656565"/><path d="M179,51 H184 Q192,53 193,64 H187 Q185,58 179,57 Z" fill="#ffffff"/><g stroke="#ffffff" stroke-width="0.9" fill="none"><circle cx="222" cy="56" r="2"/><circle cx="225" cy="53.5" r="1.8"/><path d="M227,58 v-4 q1,-2 3,-1"/></g><path d="M188,65.5 h28 M187,68.5 h32" stroke="#1a1a1a" stroke-width="0.9" stroke-dasharray="1,2.2"/><path d="M186,72.5 h8 M186,74.5 h8 M186,77.5 h26 M186,79.5 h27 M188,82.5 h23" stroke="#ffffff" stroke-width="0.9" stroke-dasharray="1,2.4" opacity="0.85"/><rect x="13" y="88" width="52" height="34" fill="#656565"/><path d="M13,89 H18 Q26,91 27,102 H21 Q19,96 13,95 Z" fill="#ffffff"/><g stroke="#ffffff" stroke-width="0.9" fill="none"><circle cx="56" cy="94" r="2"/><circle cx="59" cy="91.5" r="1.8"/><path d="M61,96 v-4 q1,-2 3,-1"/></g><path d="M22,103.5 h28 M21,106.5 h32" stroke="#1a1a1a" stroke-width="0.9" stroke-dasharray="1,2.2"/><path d="M20,110.5 h8 M20,112.5 h8 M20,115.5 h26 M20,117.5 h27 M22,120.5 h23" stroke="#ffffff" stroke-width="0.9" stroke-dasharray="1,2.4" opacity="0.85"/><rect x="69" y="88" width="52" height="34" fill="#656565"/><path d="M69,89 H74 Q82,91 83,102 H77 Q75,96 69,95 Z" fill="#ffffff"/><g stroke="#ffffff" stroke-width="0.9" fill="none"><circle cx="112" cy="94" r="2"/><circle cx="115" cy="91.5" r="1.8"/><path d="M117,96 v-4 q1,-2 3,-1"/></g><path d="M78,103.5 h28 M77,106.5 h32" stroke="#1a1a1a" stroke-width="0.9" stroke-dasharray="1,2.2"/><path d="M76,110.5 h8 M76,112.5 h8 M76,115.5 h26 M76,117.5 h27 M78,120.5 h23" stroke="#ffffff" stroke-width="0.9" stroke-dasharray="1,2.4" opacity="0.85"/><rect x="124" y="88" width="52" height="34" fill="#656565"/><path d="M124,89 H129 Q137,91 138,102 H132 Q130,96 124,95 Z" fill="#ffffff"/><g stroke="#ffffff" stroke-width="0.9" fill="none"><circle cx="167" cy="94" r="2"/><circle cx="170" cy="91.5" r="1.8"/><path d="M172,96 v-4 q1,-2 3,-1"/></g><path d="M133,103.5 h28 M132,106.5 h32" stroke="#1a1a1a" stroke-width="0.9" stroke-dasharray="1,2.2"/><path d="M131,110.5 h8 M131,112.5 h8 M131,115.5 h26 M131,117.5 h27 M133,120.5 h23" stroke="#ffffff" stroke-width="0.9" stroke-dasharray="1,2.4" opacity="0.85"/><rect x="179" y="88" width="52" height="34" fill="#656565"/><path d="M179,89 H184 Q192,91 193,102 H187 Q185,96 179,95 Z" fill="#ffffff"/><g stroke="#ffffff" stroke-width="0.9" fill="none"><circle cx="222" cy="94" r="2"/><circle cx="225" cy="91.5" r="1.8"/><path d="M227,96 v-4 q1,-2 3,-1"/></g><path d="M188,103.5 h28 M187,106.5 h32" stroke="#1a1a1a" stroke-width="0.9" stroke-dasharray="1,2.2"/><path d="M186,110.5 h8 M186,112.5 h8 M186,115.5 h26 M186,117.5 h27 M188,120.5 h23" stroke="#ffffff" stroke-width="0.9" stroke-dasharray="1,2.4" opacity="0.85"/><rect x="13" y="126" width="52" height="34" fill="#656565"/><path d="M13,127 H18 Q26,129 27,140 H21 Q19,134 13,133 Z" fill="#ffffff"/><g stroke="#ffffff" stroke-width="0.9" fill="none"><circle cx="56" cy="132" r="2"/><circle cx="59" cy="129.5" r="1.8"/><path d="M61,134 v-4 q1,-2 3,-1"/></g><path d="M22,141.5 h28 M21,144.5 h32" stroke="#1a1a1a" stroke-width="0.9" stroke-dasharray="1,2.2"/><path d="M20,148.5 h8 M20,150.5 h8 M20,153.5 h26 M20,155.5 h27 M22,158.5 h23" stroke="#ffffff" stroke-width="0.9" stroke-dasharray="1,2.4" opacity="0.85"/><rect x="69" y="126" width="52" height="34" fill="#656565"/><path d="M69,127 H74 Q82,129 83,140 H77 Q75,134 69,133 Z" fill="#ffffff"/><g stroke="#ffffff" stroke-width="0.9" fill="none"><circle cx="112" cy="132" r="2"/><circle cx="115" cy="129.5" r="1.8"/><path d="M117,134 v-4 q1,-2 3,-1"/></g><path d="M78,141.5 h28 M77,144.5 h32" stroke="#1a1a1a" stroke-width="0.9" stroke-dasharray="1,2.2"/><path d="M76,148.5 h8 M76,150.5 h8 M76,153.5 h26 M76,155.5 h27 M78,158.5 h23" stroke="#ffffff" stroke-width="0.9" stroke-dasharray="1,2.4" opacity="0.85"/><rect x="124" y="126" width="52" height="34" fill="#656565"/><path d="M124,127 H129 Q137,129 138,140 H132 Q130,134 124,133 Z" fill="#ffffff"/><g stroke="#ffffff" stroke-width="0.9" fill="none"><circle cx="167" cy="132" r="2"/><circle cx="170" cy="129.5" r="1.8"/><path d="M172,134 v-4 q1,-2 3,-1"/></g><path d="M133,141.5 h28 M132,144.5 h32" stroke="#1a1a1a" stroke-width="0.9" stroke-dasharray="1,2.2"/><path d="M131,148.5 h8 M131,150.5 h8 M131,153.5 h26 M131,155.5 h27 M133,158.5 h23" stroke="#ffffff" stroke-width="0.9" stroke-dasharray="1,2.4" opacity="0.85"/><rect x="179" y="126" width="52" height="34" fill="#656565"/><path d="M179,127 H184 Q192,129 193,140 H187 Q185,134 179,133 Z" fill="#ffffff"/><g stroke="#ffffff" stroke-width="0.9" fill="none"><circle cx="222" cy="132" r="2"/><circle cx="225" cy="129.5" r="1.8"/><path d="M227,134 v-4 q1,-2 3,-1"/></g><path d="M188,141.5 h28 M187,144.5 h32" stroke="#1a1a1a" stroke-width="0.9" stroke-dasharray="1,2.2"/><path d="M186,148.5 h8 M186,150.5 h8 M186,153.5 h26 M186,155.5 h27 M188,158.5 h23" stroke="#ffffff" stroke-width="0.9" stroke-dasharray="1,2.4" opacity="0.85"/><g stroke="#4b6f9e" fill="none" stroke-width="1.3"><circle cx="37.4" cy="7.2" r="1.5"/><circle cx="36.1" cy="10.3" r="1.5"/></g><path d="M38,8.7 L45,10.2 L45,11.2 L38,10.4 Z" fill="#4b6f9e" stroke="#4b6f9e" stroke-width="0.8"/><g stroke="#4b6f9e" fill="none" stroke-width="1.3"><circle cx="13.2" cy="27" r="1.5"/><circle cx="7" cy="31.4" r="1.5"/></g><path d="M10.6,24 L9.6,34.5" stroke="#4b6f9e" stroke-width="2"/><g stroke="#4b6f9e" fill="none" stroke-width="1.3"><circle cx="93.4" cy="7.2" r="1.5"/><circle cx="92.1" cy="10.3" r="1.5"/></g><path d="M94,8.7 L101,10.2 L101,11.2 L94,10.4 Z" fill="#4b6f9e" stroke="#4b6f9e" stroke-width="0.8"/><g stroke="#4b6f9e" fill="none" stroke-width="1.3"><circle cx="69.2" cy="27" r="1.5"/><circle cx="63" cy="31.4" r="1.5"/></g><path d="M66.6,24 L65.6,34.5" stroke="#4b6f9e" stroke-width="2"/><g stroke="#4b6f9e" fill="none" stroke-width="1.3"><circle cx="148.4" cy="7.2" r="1.5"/><circle cx="147.1" cy="10.3" r="1.5"/></g><path d="M149,8.7 L156,10.2 L156,11.2 L149,10.4 Z" fill="#4b6f9e" stroke="#4b6f9e" stroke-width="0.8"/><g stroke="#4b6f9e" fill="none" stroke-width="1.3"><circle cx="124.2" cy="27" r="1.5"/><circle cx="118" cy="31.4" r="1.5"/></g><path d="M121.6,24 L120.6,34.5" stroke="#4b6f9e" stroke-width="2"/><g stroke="#4b6f9e" fill="none" stroke-width="1.3"><circle cx="203.4" cy="7.2" r="1.5"/><circle cx="202.1" cy="10.3" r="1.5"/></g><path d="M204,8.7 L211,10.2 L211,11.2 L204,10.4 Z" fill="#4b6f9e" stroke="#4b6f9e" stroke-width="0.8"/><g stroke="#4b6f9e" fill="none" stroke-width="1.3"><circle cx="179.2" cy="27" r="1.5"/><circle cx="173" cy="31.4" r="1.5"/></g><path d="M176.6,24 L175.6,34.5" stroke="#4b6f9e" stroke-width="2"/><g stroke="#4b6f9e" fill="none" stroke-width="1.3"><circle cx="237.2" cy="27" r="1.5"/><circle cx="231" cy="31.4" r="1.5"/></g><path d="M234.6,24 L233.6,34.5" stroke="#4b6f9e" stroke-width="2"/><g stroke="#4b6f9e" fill="none" stroke-width="1.3"><circle cx="37.4" cy="45.2" r="1.5"/><circle cx="36.1" cy="48.3" r="1.5"/></g><path d="M38,46.7 L45,48.2 L45,49.2 L38,48.4 Z" fill="#4b6f9e" stroke="#4b6f9e" stroke-width="0.8"/><g stroke="#4b6f9e" fill="none" stroke-width="1.3"><circle cx="13.2" cy="65" r="1.5"/><circle cx="7" cy="69.4" r="1.5"/></g><path d="M10.6,62 L9.6,72.5" stroke="#4b6f9e" stroke-width="2"/><g stroke="#4b6f9e" fill="none" stroke-width="1.3"><circle cx="93.4" cy="45.2" r="1.5"/><circle cx="92.1" cy="48.3" r="1.5"/></g><path d="M94,46.7 L101,48.2 L101,49.2 L94,48.4 Z" fill="#4b6f9e" stroke="#4b6f9e" stroke-width="0.8"/><g stroke="#4b6f9e" fill="none" stroke-width="1.3"><circle cx="69.2" cy="65" r="1.5"/><circle cx="63" cy="69.4" r="1.5"/></g><path d="M66.6,62 L65.6,72.5" stroke="#4b6f9e" stroke-width="2"/><g stroke="#4b6f9e" fill="none" stroke-width="1.3"><circle cx="148.4" cy="45.2" r="1.5"/><circle cx="147.1" cy="48.3" r="1.5"/></g><path d="M149,46.7 L156,48.2 L156,49.2 L149,48.4 Z" fill="#4b6f9e" stroke="#4b6f9e" stroke-width="0.8"/><g stroke="#4b6f9e" fill="none" stroke-width="1.3"><circle cx="124.2" cy="65" r="1.5"/><circle cx="118" cy="69.4" r="1.5"/></g><path d="M121.6,62 L120.6,72.5" stroke="#4b6f9e" stroke-width="2"/><g stroke="#4b6f9e" fill="none" stroke-width="1.3"><circle cx="203.4" cy="45.2" r="1.5"/><circle cx="202.1" cy="48.3" r="1.5"/></g><path d="M204,46.7 L211,48.2 L211,49.2 L204,48.4 Z" fill="#4b6f9e" stroke="#4b6f9e" stroke-width="0.8"/><g stroke="#4b6f9e" fill="none" stroke-width="1.3"><circle cx="179.2" cy="65" r="1.5"/><circle cx="173" cy="69.4" r="1.5"/></g><path d="M176.6,62 L175.6,72.5" stroke="#4b6f9e" stroke-width="2"/><g stroke="#4b6f9e" fill="none" stroke-width="1.3"><circle cx="237.2" cy="65" r="1.5"/><circle cx="231" cy="69.4" r="1.5"/></g><path d="M234.6,62 L233.6,72.5" stroke="#4b6f9e" stroke-width="2"/><g stroke="#4b6f9e" fill="none" stroke-width="1.3"><circle cx="37.4" cy="83.2" r="1.5"/><circle cx="36.1" cy="86.3" r="1.5"/></g><path d="M38,84.7 L45,86.2 L45,87.2 L38,86.4 Z" fill="#4b6f9e" stroke="#4b6f9e" stroke-width="0.8"/><g stroke="#4b6f9e" fill="none" stroke-width="1.3"><circle cx="13.2" cy="103" r="1.5"/><circle cx="7" cy="107.4" r="1.5"/></g><path d="M10.6,100 L9.6,110.5" stroke="#4b6f9e" stroke-width="2"/><g stroke="#4b6f9e" fill="none" stroke-width="1.3"><circle cx="93.4" cy="83.2" r="1.5"/><circle cx="92.1" cy="86.3" r="1.5"/></g><path d="M94,84.7 L101,86.2 L101,87.2 L94,86.4 Z" fill="#4b6f9e" stroke="#4b6f9e" stroke-width="0.8"/><g stroke="#4b6f9e" fill="none" stroke-width="1.3"><circle cx="69.2" cy="103" r="1.5"/><circle cx="63" cy="107.4" r="1.5"/></g><path d="M66.6,100 L65.6,110.5" stroke="#4b6f9e" stroke-width="2"/><g stroke="#4b6f9e" fill="none" stroke-width="1.3"><circle cx="148.4" cy="83.2" r="1.5"/><circle cx="147.1" cy="86.3" r="1.5"/></g><path d="M149,84.7 L156,86.2 L156,87.2 L149,86.4 Z" fill="#4b6f9e" stroke="#4b6f9e" stroke-width="0.8"/><g stroke="#4b6f9e" fill="none" stroke-width="1.3"><circle cx="124.2" cy="103" r="1.5"/><circle cx="118" cy="107.4" r="1.5"/></g><path d="M121.6,100 L120.6,110.5" stroke="#4b6f9e" stroke-width="2"/><g stroke="#4b6f9e" fill="none" stroke-width="1.3"><circle cx="203.4" cy="83.2" r="1.5"/><circle cx="202.1" cy="86.3" r="1.5"/></g><path d="M204,84.7 L211,86.2 L211,87.2 L204,86.4 Z" fill="#4b6f9e" stroke="#4b6f9e" stroke-width="0.8"/><g stroke="#4b6f9e" fill="none" stroke-width="1.3"><circle cx="179.2" cy="103" r="1.5"/><circle cx="173" cy="107.4" r="1.5"/></g><path d="M176.6,100 L175.6,110.5" stroke="#4b6f9e" stroke-width="2"/><g stroke="#4b6f9e" fill="none" stroke-width="1.3"><circle cx="237.2" cy="103" r="1.5"/><circle cx="231" cy="107.4" r="1.5"/></g><path d="M234.6,100 L233.6,110.5" stroke="#4b6f9e" stroke-width="2"/><g stroke="#4b6f9e" fill="none" stroke-width="1.3"><circle cx="37.4" cy="121.2" r="1.5"/><circle cx="36.1" cy="124.3" r="1.5"/></g><path d="M38,122.7 L45,124.2 L45,125.2 L38,124.4 Z" fill="#4b6f9e" stroke="#4b6f9e" stroke-width="0.8"/><g stroke="#4b6f9e" fill="none" stroke-width="1.3"><circle cx="13.2" cy="141" r="1.5"/><circle cx="7" cy="145.4" r="1.5"/></g><path d="M10.6,138 L9.6,148.5" stroke="#4b6f9e" stroke-width="2"/><g stroke="#4b6f9e" fill="none" stroke-width="1.3"><circle cx="93.4" cy="121.2" r="1.5"/><circle cx="92.1" cy="124.3" r="1.5"/></g><path d="M94,122.7 L101,124.2 L101,125.2 L94,124.4 Z" fill="#4b6f9e" stroke="#4b6f9e" stroke-width="0.8"/><g stroke="#4b6f9e" fill="none" stroke-width="1.3"><circle cx="69.2" cy="141" r="1.5"/><circle cx="63" cy="145.4" r="1.5"/></g><path d="M66.6,138 L65.6,148.5" stroke="#4b6f9e" stroke-width="2"/><g stroke="#4b6f9e" fill="none" stroke-width="1.3"><circle cx="148.4" cy="121.2" r="1.5"/><circle cx="147.1" cy="124.3" r="1.5"/></g><path d="M149,122.7 L156,124.2 L156,125.2 L149,124.4 Z" fill="#4b6f9e" stroke="#4b6f9e" stroke-width="0.8"/><g stroke="#4b6f9e" fill="none" stroke-width="1.3"><circle cx="124.2" cy="141" r="1.5"/><circle cx="118" cy="145.4" r="1.5"/></g><path d="M121.6,138 L120.6,148.5" stroke="#4b6f9e" stroke-width="2"/><g stroke="#4b6f9e" fill="none" stroke-width="1.3"><circle cx="203.4" cy="121.2" r="1.5"/><circle cx="202.1" cy="124.3" r="1.5"/></g><path d="M204,122.7 L211,124.2 L211,125.2 L204,124.4 Z" fill="#4b6f9e" stroke="#4b6f9e" stroke-width="0.8"/><g stroke="#4b6f9e" fill="none" stroke-width="1.3"><circle cx="179.2" cy="141" r="1.5"/><circle cx="173" cy="145.4" r="1.5"/></g><path d="M176.6,138 L175.6,148.5" stroke="#4b6f9e" stroke-width="2"/><g stroke="#4b6f9e" fill="none" stroke-width="1.3"><circle cx="237.2" cy="141" r="1.5"/><circle cx="231" cy="145.4" r="1.5"/></g><path d="M234.6,138 L233.6,148.5" stroke="#4b6f9e" stroke-width="2"/><g stroke="#4b6f9e" fill="none" stroke-width="1.3"><circle cx="37.4" cy="161.2" r="1.5"/><circle cx="36.1" cy="164.3" r="1.5"/></g><path d="M38,162.7 L45,164.2 L45,165.2 L38,164.4 Z" fill="#4b6f9e" stroke="#4b6f9e" stroke-width="0.8"/><g stroke="#4b6f9e" fill="none" stroke-width="1.3"><circle cx="93.4" cy="161.2" r="1.5"/><circle cx="92.1" cy="164.3" r="1.5"/></g><path d="M94,162.7 L101,164.2 L101,165.2 L94,164.4 Z" fill="#4b6f9e" stroke="#4b6f9e" stroke-width="0.8"/><g stroke="#4b6f9e" fill="none" stroke-width="1.3"><circle cx="148.4" cy="161.2" r="1.5"/><circle cx="147.1" cy="164.3" r="1.5"/></g><path d="M149,162.7 L156,164.2 L156,165.2 L149,164.4 Z" fill="#4b6f9e" stroke="#4b6f9e" stroke-width="0.8"/><g stroke="#4b6f9e" fill="none" stroke-width="1.3"><circle cx="203.4" cy="161.2" r="1.5"/><circle cx="202.1" cy="164.3" r="1.5"/></g><path d="M204,162.7 L211,164.2 L211,165.2 L204,164.4 Z" fill="#4b6f9e" stroke="#4b6f9e" stroke-width="0.8"/></svg>
<div class="a" style="left:1011px;top:410px;width:2px;height:173px;background:#5c636b"></div>
<div class="a" style="left:768px;top:581px;width:245px;height:2px;background:#5c636b"></div>
<div class="a" style="left:766px;top:408px;width:245px;height:173px;background:#ffffff"></div>
<svg style="left:766px;top:408px" width="246" height="173" viewBox="0 0 246 173"><path d="M12.5,6 V168" stroke="#e2e8ee" stroke-width="1"/><path d="M65.5,6 V168" stroke="#e2e8ee" stroke-width="1"/><path d="M67.5,6 V168" stroke="#e2e8ee" stroke-width="1"/><path d="M121.5,6 V168" stroke="#e2e8ee" stroke-width="1"/><path d="M123.5,6 V168" stroke="#e2e8ee" stroke-width="1"/><path d="M176.5,6 V168" stroke="#e2e8ee" stroke-width="1"/><path d="M178.5,6 V168" stroke="#e2e8ee" stroke-width="1"/><path d="M230.5,6 V168" stroke="#e2e8ee" stroke-width="1"/><path d="M8,11.5 H240" stroke="#e8ecf2" stroke-width="1"/><path d="M8,47.5 H240" stroke="#e8ecf2" stroke-width="1"/><path d="M8,49.5 H240" stroke="#e8ecf2" stroke-width="1"/><path d="M8,85.5 H240" stroke="#e8ecf2" stroke-width="1"/><path d="M8,87.5 H240" stroke="#e8ecf2" stroke-width="1"/><path d="M8,123.5 H240" stroke="#e8ecf2" stroke-width="1"/><path d="M8,125.5 H240" stroke="#e8ecf2" stroke-width="1"/><path d="M8,161.5 H240" stroke="#e8ecf2" stroke-width="1"/><path d="M34,20 l2,1.5 M38,23 q-2,-4 0,-7 q2,-2 4,0 l1,1.5 M40,20 h1.5 M43.5,17 v4 h1 M46.5,17 v4 M49.5,18 v3 q1,1 2,0 q1,1 2,0 v-3 M54,18.5 h2 M54,20.5 h2 M57.5,21 h1 M48,23.5 h14 M42,26.5 h3 q3,0 5,-3" stroke="#1a1a1a" stroke-width="1" fill="none"/><circle cx="15" cy="38.5" r="2.9" fill="#e2e2e2"/><circle cx="21" cy="38.5" r="2.9" fill="#e2e2e2"/><circle cx="27" cy="38.5" r="2.9" fill="#e2e2e2"/><circle cx="33" cy="38.5" r="2.9" fill="#e2e2e2"/><circle cx="39" cy="38.5" r="2.9" fill="#e2e2e2"/><circle cx="45" cy="38.5" r="2.9" fill="#e2e2e2"/><circle cx="51" cy="38.5" r="2.9" fill="#e2e2e2"/><path d="M13,44.5 h2 M16,44.5 h3 M25,44.5 h2" stroke="#333" stroke-width="0.9"/><path d="M89,20 l2,1.5 M93,23 q-2,-4 0,-7 q2,-2 4,0 l1,1.5 M95,20 h1.5 M98.5,17 v4 h1 M101.5,17 v4 M104.5,18 v3 q1,1 2,0 q1,1 2,0 v-3 M109,18.5 h2 M109,20.5 h2 M112.5,21 h1 M103,23.5 h14 M97,26.5 h3 q3,0 5,-3" stroke="#1a1a1a" stroke-width="1" fill="none"/><circle cx="70" cy="38.5" r="2.9" fill="#e2e2e2"/><circle cx="76" cy="38.5" r="2.9" fill="#e2e2e2"/><circle cx="82" cy="38.5" r="2.9" fill="#e2e2e2"/><circle cx="88" cy="38.5" r="2.9" fill="#e2e2e2"/><circle cx="94" cy="38.5" r="2.9" fill="#e2e2e2"/><circle cx="100" cy="38.5" r="2.9" fill="#e2e2e2"/><circle cx="106" cy="38.5" r="2.9" fill="#e2e2e2"/><path d="M68,44.5 h2 M71,44.5 h3 M80,44.5 h2" stroke="#333" stroke-width="0.9"/><path d="M145,20 l2,1.5 M149,23 q-2,-4 0,-7 q2,-2 4,0 l1,1.5 M151,20 h1.5 M154.5,17 v4 h1 M157.5,17 v4 M160.5,18 v3 q1,1 2,0 q1,1 2,0 v-3 M165,18.5 h2 M165,20.5 h2 M168.5,21 h1 M159,23.5 h14 M153,26.5 h3 q3,0 5,-3" stroke="#1a1a1a" stroke-width="1" fill="none"/><circle cx="126" cy="38.5" r="2.9" fill="#e2e2e2"/><circle cx="132" cy="38.5" r="2.9" fill="#e2e2e2"/><circle cx="138" cy="38.5" r="2.9" fill="#e2e2e2"/><circle cx="144" cy="38.5" r="2.9" fill="#e2e2e2"/><circle cx="150" cy="38.5" r="2.9" fill="#e2e2e2"/><circle cx="156" cy="38.5" r="2.9" fill="#e2e2e2"/><circle cx="162" cy="38.5" r="2.9" fill="#e2e2e2"/><path d="M124,44.5 h2 M127,44.5 h3 M136,44.5 h2" stroke="#333" stroke-width="0.9"/><path d="M200,20 l2,1.5 M204,23 q-2,-4 0,-7 q2,-2 4,0 l1,1.5 M206,20 h1.5 M209.5,17 v4 h1 M212.5,17 v4 M215.5,18 v3 q1,1 2,0 q1,1 2,0 v-3 M220,18.5 h2 M220,20.5 h2 M223.5,21 h1 M214,23.5 h14 M208,26.5 h3 q3,0 5,-3" stroke="#1a1a1a" stroke-width="1" fill="none"/><circle cx="181" cy="38.5" r="2.9" fill="#e2e2e2"/><circle cx="187" cy="38.5" r="2.9" fill="#e2e2e2"/><circle cx="193" cy="38.5" r="2.9" fill="#e2e2e2"/><circle cx="199" cy="38.5" r="2.9" fill="#e2e2e2"/><circle cx="205" cy="38.5" r="2.9" fill="#e2e2e2"/><circle cx="211" cy="38.5" r="2.9" fill="#e2e2e2"/><circle cx="217" cy="38.5" r="2.9" fill="#e2e2e2"/><path d="M179,44.5 h2 M182,44.5 h3 M191,44.5 h2" stroke="#333" stroke-width="0.9"/><path d="M34,58 l2,1.5 M38,61 q-2,-4 0,-7 q2,-2 4,0 l1,1.5 M40,58 h1.5 M43.5,55 v4 h1 M46.5,55 v4 M49.5,56 v3 q1,1 2,0 q1,1 2,0 v-3 M54,56.5 h2 M54,58.5 h2 M57.5,59 h1 M48,61.5 h14 M42,64.5 h3 q3,0 5,-3" stroke="#1a1a1a" stroke-width="1" fill="none"/><circle cx="15" cy="76.5" r="2.9" fill="#e2e2e2"/><circle cx="21" cy="76.5" r="2.9" fill="#e2e2e2"/><circle cx="27" cy="76.5" r="2.9" fill="#e2e2e2"/><circle cx="33" cy="76.5" r="2.9" fill="#e2e2e2"/><circle cx="39" cy="76.5" r="2.9" fill="#e2e2e2"/><circle cx="45" cy="76.5" r="2.9" fill="#e2e2e2"/><circle cx="51" cy="76.5" r="2.9" fill="#e2e2e2"/><path d="M13,82.5 h2 M16,82.5 h3 M25,82.5 h2" stroke="#333" stroke-width="0.9"/><path d="M89,58 l2,1.5 M93,61 q-2,-4 0,-7 q2,-2 4,0 l1,1.5 M95,58 h1.5 M98.5,55 v4 h1 M101.5,55 v4 M104.5,56 v3 q1,1 2,0 q1,1 2,0 v-3 M109,56.5 h2 M109,58.5 h2 M112.5,59 h1 M103,61.5 h14 M97,64.5 h3 q3,0 5,-3" stroke="#1a1a1a" stroke-width="1" fill="none"/><circle cx="70" cy="76.5" r="2.9" fill="#e2e2e2"/><circle cx="76" cy="76.5" r="2.9" fill="#e2e2e2"/><circle cx="82" cy="76.5" r="2.9" fill="#e2e2e2"/><circle cx="88" cy="76.5" r="2.9" fill="#e2e2e2"/><circle cx="94" cy="76.5" r="2.9" fill="#e2e2e2"/><circle cx="100" cy="76.5" r="2.9" fill="#e2e2e2"/><circle cx="106" cy="76.5" r="2.9" fill="#e2e2e2"/><path d="M68,82.5 h2 M71,82.5 h3 M80,82.5 h2" stroke="#333" stroke-width="0.9"/><path d="M145,58 l2,1.5 M149,61 q-2,-4 0,-7 q2,-2 4,0 l1,1.5 M151,58 h1.5 M154.5,55 v4 h1 M157.5,55 v4 M160.5,56 v3 q1,1 2,0 q1,1 2,0 v-3 M165,56.5 h2 M165,58.5 h2 M168.5,59 h1 M159,61.5 h14 M153,64.5 h3 q3,0 5,-3" stroke="#1a1a1a" stroke-width="1" fill="none"/><circle cx="126" cy="76.5" r="2.9" fill="#e2e2e2"/><circle cx="132" cy="76.5" r="2.9" fill="#e2e2e2"/><circle cx="138" cy="76.5" r="2.9" fill="#e2e2e2"/><circle cx="144" cy="76.5" r="2.9" fill="#e2e2e2"/><circle cx="150" cy="76.5" r="2.9" fill="#e2e2e2"/><circle cx="156" cy="76.5" r="2.9" fill="#e2e2e2"/><circle cx="162" cy="76.5" r="2.9" fill="#e2e2e2"/><path d="M124,82.5 h2 M127,82.5 h3 M136,82.5 h2" stroke="#333" stroke-width="0.9"/><path d="M200,58 l2,1.5 M204,61 q-2,-4 0,-7 q2,-2 4,0 l1,1.5 M206,58 h1.5 M209.5,55 v4 h1 M212.5,55 v4 M215.5,56 v3 q1,1 2,0 q1,1 2,0 v-3 M220,56.5 h2 M220,58.5 h2 M223.5,59 h1 M214,61.5 h14 M208,64.5 h3 q3,0 5,-3" stroke="#1a1a1a" stroke-width="1" fill="none"/><circle cx="181" cy="76.5" r="2.9" fill="#e2e2e2"/><circle cx="187" cy="76.5" r="2.9" fill="#e2e2e2"/><circle cx="193" cy="76.5" r="2.9" fill="#e2e2e2"/><circle cx="199" cy="76.5" r="2.9" fill="#e2e2e2"/><circle cx="205" cy="76.5" r="2.9" fill="#e2e2e2"/><circle cx="211" cy="76.5" r="2.9" fill="#e2e2e2"/><circle cx="217" cy="76.5" r="2.9" fill="#e2e2e2"/><path d="M179,82.5 h2 M182,82.5 h3 M191,82.5 h2" stroke="#333" stroke-width="0.9"/><path d="M34,96 l2,1.5 M38,99 q-2,-4 0,-7 q2,-2 4,0 l1,1.5 M40,96 h1.5 M43.5,93 v4 h1 M46.5,93 v4 M49.5,94 v3 q1,1 2,0 q1,1 2,0 v-3 M54,94.5 h2 M54,96.5 h2 M57.5,97 h1 M48,99.5 h14 M42,102.5 h3 q3,0 5,-3" stroke="#1a1a1a" stroke-width="1" fill="none"/><circle cx="15" cy="114.5" r="2.9" fill="#e2e2e2"/><circle cx="21" cy="114.5" r="2.9" fill="#e2e2e2"/><circle cx="27" cy="114.5" r="2.9" fill="#e2e2e2"/><circle cx="33" cy="114.5" r="2.9" fill="#e2e2e2"/><circle cx="39" cy="114.5" r="2.9" fill="#e2e2e2"/><circle cx="45" cy="114.5" r="2.9" fill="#e2e2e2"/><circle cx="51" cy="114.5" r="2.9" fill="#e2e2e2"/><path d="M13,120.5 h2 M16,120.5 h3 M25,120.5 h2" stroke="#333" stroke-width="0.9"/><path d="M89,96 l2,1.5 M93,99 q-2,-4 0,-7 q2,-2 4,0 l1,1.5 M95,96 h1.5 M98.5,93 v4 h1 M101.5,93 v4 M104.5,94 v3 q1,1 2,0 q1,1 2,0 v-3 M109,94.5 h2 M109,96.5 h2 M112.5,97 h1 M103,99.5 h14 M97,102.5 h3 q3,0 5,-3" stroke="#1a1a1a" stroke-width="1" fill="none"/><circle cx="70" cy="114.5" r="2.9" fill="#e2e2e2"/><circle cx="76" cy="114.5" r="2.9" fill="#e2e2e2"/><circle cx="82" cy="114.5" r="2.9" fill="#e2e2e2"/><circle cx="88" cy="114.5" r="2.9" fill="#e2e2e2"/><circle cx="94" cy="114.5" r="2.9" fill="#e2e2e2"/><circle cx="100" cy="114.5" r="2.9" fill="#e2e2e2"/><circle cx="106" cy="114.5" r="2.9" fill="#e2e2e2"/><path d="M68,120.5 h2 M71,120.5 h3 M80,120.5 h2" stroke="#333" stroke-width="0.9"/><path d="M145,96 l2,1.5 M149,99 q-2,-4 0,-7 q2,-2 4,0 l1,1.5 M151,96 h1.5 M154.5,93 v4 h1 M157.5,93 v4 M160.5,94 v3 q1,1 2,0 q1,1 2,0 v-3 M165,94.5 h2 M165,96.5 h2 M168.5,97 h1 M159,99.5 h14 M153,102.5 h3 q3,0 5,-3" stroke="#1a1a1a" stroke-width="1" fill="none"/><circle cx="126" cy="114.5" r="2.9" fill="#e2e2e2"/><circle cx="132" cy="114.5" r="2.9" fill="#e2e2e2"/><circle cx="138" cy="114.5" r="2.9" fill="#e2e2e2"/><circle cx="144" cy="114.5" r="2.9" fill="#e2e2e2"/><circle cx="150" cy="114.5" r="2.9" fill="#e2e2e2"/><circle cx="156" cy="114.5" r="2.9" fill="#e2e2e2"/><circle cx="162" cy="114.5" r="2.9" fill="#e2e2e2"/><path d="M124,120.5 h2 M127,120.5 h3 M136,120.5 h2" stroke="#333" stroke-width="0.9"/><path d="M200,96 l2,1.5 M204,99 q-2,-4 0,-7 q2,-2 4,0 l1,1.5 M206,96 h1.5 M209.5,93 v4 h1 M212.5,93 v4 M215.5,94 v3 q1,1 2,0 q1,1 2,0 v-3 M220,94.5 h2 M220,96.5 h2 M223.5,97 h1 M214,99.5 h14 M208,102.5 h3 q3,0 5,-3" stroke="#1a1a1a" stroke-width="1" fill="none"/><circle cx="181" cy="114.5" r="2.9" fill="#e2e2e2"/><circle cx="187" cy="114.5" r="2.9" fill="#e2e2e2"/><circle cx="193" cy="114.5" r="2.9" fill="#e2e2e2"/><circle cx="199" cy="114.5" r="2.9" fill="#e2e2e2"/><circle cx="205" cy="114.5" r="2.9" fill="#e2e2e2"/><circle cx="211" cy="114.5" r="2.9" fill="#e2e2e2"/><circle cx="217" cy="114.5" r="2.9" fill="#e2e2e2"/><path d="M179,120.5 h2 M182,120.5 h3 M191,120.5 h2" stroke="#333" stroke-width="0.9"/><path d="M34,134 l2,1.5 M38,137 q-2,-4 0,-7 q2,-2 4,0 l1,1.5 M40,134 h1.5 M43.5,131 v4 h1 M46.5,131 v4 M49.5,132 v3 q1,1 2,0 q1,1 2,0 v-3 M54,132.5 h2 M54,134.5 h2 M57.5,135 h1 M48,137.5 h14 M42,140.5 h3 q3,0 5,-3" stroke="#1a1a1a" stroke-width="1" fill="none"/><circle cx="15" cy="152.5" r="2.9" fill="#e2e2e2"/><circle cx="21" cy="152.5" r="2.9" fill="#e2e2e2"/><circle cx="27" cy="152.5" r="2.9" fill="#e2e2e2"/><circle cx="33" cy="152.5" r="2.9" fill="#e2e2e2"/><circle cx="39" cy="152.5" r="2.9" fill="#e2e2e2"/><circle cx="45" cy="152.5" r="2.9" fill="#e2e2e2"/><circle cx="51" cy="152.5" r="2.9" fill="#e2e2e2"/><path d="M13,158.5 h2 M16,158.5 h3 M25,158.5 h2" stroke="#333" stroke-width="0.9"/><path d="M89,134 l2,1.5 M93,137 q-2,-4 0,-7 q2,-2 4,0 l1,1.5 M95,134 h1.5 M98.5,131 v4 h1 M101.5,131 v4 M104.5,132 v3 q1,1 2,0 q1,1 2,0 v-3 M109,132.5 h2 M109,134.5 h2 M112.5,135 h1 M103,137.5 h14 M97,140.5 h3 q3,0 5,-3" stroke="#1a1a1a" stroke-width="1" fill="none"/><circle cx="70" cy="152.5" r="2.9" fill="#e2e2e2"/><circle cx="76" cy="152.5" r="2.9" fill="#e2e2e2"/><circle cx="82" cy="152.5" r="2.9" fill="#e2e2e2"/><circle cx="88" cy="152.5" r="2.9" fill="#e2e2e2"/><circle cx="94" cy="152.5" r="2.9" fill="#e2e2e2"/><circle cx="100" cy="152.5" r="2.9" fill="#e2e2e2"/><circle cx="106" cy="152.5" r="2.9" fill="#e2e2e2"/><path d="M68,158.5 h2 M71,158.5 h3 M80,158.5 h2" stroke="#333" stroke-width="0.9"/><path d="M145,134 l2,1.5 M149,137 q-2,-4 0,-7 q2,-2 4,0 l1,1.5 M151,134 h1.5 M154.5,131 v4 h1 M157.5,131 v4 M160.5,132 v3 q1,1 2,0 q1,1 2,0 v-3 M165,132.5 h2 M165,134.5 h2 M168.5,135 h1 M159,137.5 h14 M153,140.5 h3 q3,0 5,-3" stroke="#1a1a1a" stroke-width="1" fill="none"/><circle cx="126" cy="152.5" r="2.9" fill="#e2e2e2"/><circle cx="132" cy="152.5" r="2.9" fill="#e2e2e2"/><circle cx="138" cy="152.5" r="2.9" fill="#e2e2e2"/><circle cx="144" cy="152.5" r="2.9" fill="#e2e2e2"/><circle cx="150" cy="152.5" r="2.9" fill="#e2e2e2"/><circle cx="156" cy="152.5" r="2.9" fill="#e2e2e2"/><circle cx="162" cy="152.5" r="2.9" fill="#e2e2e2"/><path d="M124,158.5 h2 M127,158.5 h3 M136,158.5 h2" stroke="#333" stroke-width="0.9"/><path d="M200,134 l2,1.5 M204,137 q-2,-4 0,-7 q2,-2 4,0 l1,1.5 M206,134 h1.5 M209.5,131 v4 h1 M212.5,131 v4 M215.5,132 v3 q1,1 2,0 q1,1 2,0 v-3 M220,132.5 h2 M220,134.5 h2 M223.5,135 h1 M214,137.5 h14 M208,140.5 h3 q3,0 5,-3" stroke="#1a1a1a" stroke-width="1" fill="none"/><circle cx="181" cy="152.5" r="2.9" fill="#e2e2e2"/><circle cx="187" cy="152.5" r="2.9" fill="#e2e2e2"/><circle cx="193" cy="152.5" r="2.9" fill="#e2e2e2"/><circle cx="199" cy="152.5" r="2.9" fill="#e2e2e2"/><circle cx="205" cy="152.5" r="2.9" fill="#e2e2e2"/><circle cx="211" cy="152.5" r="2.9" fill="#e2e2e2"/><circle cx="217" cy="152.5" r="2.9" fill="#e2e2e2"/><path d="M179,158.5 h2 M182,158.5 h3 M191,158.5 h2" stroke="#333" stroke-width="0.9"/><g stroke="#4b6f9e" fill="none" stroke-width="1.3"><circle cx="37.4" cy="9.2" r="1.5"/><circle cx="36.1" cy="12.3" r="1.5"/></g><path d="M38,10.7 L45,12.2 L45,13.2 L38,12.4 Z" fill="#4b6f9e" stroke="#4b6f9e" stroke-width="0.8"/><g stroke="#4b6f9e" fill="none" stroke-width="1.3"><circle cx="13.2" cy="28" r="1.5"/><circle cx="7" cy="32.4" r="1.5"/></g><path d="M10.6,25 L9.6,35.5" stroke="#4b6f9e" stroke-width="2"/><g stroke="#4b6f9e" fill="none" stroke-width="1.3"><circle cx="92.4" cy="9.2" r="1.5"/><circle cx="91.1" cy="12.3" r="1.5"/></g><path d="M93,10.7 L100,12.2 L100,13.2 L93,12.4 Z" fill="#4b6f9e" stroke="#4b6f9e" stroke-width="0.8"/><g stroke="#4b6f9e" fill="none" stroke-width="1.3"><circle cx="68.2" cy="28" r="1.5"/><circle cx="62" cy="32.4" r="1.5"/></g><path d="M65.6,25 L64.6,35.5" stroke="#4b6f9e" stroke-width="2"/><g stroke="#4b6f9e" fill="none" stroke-width="1.3"><circle cx="148.4" cy="9.2" r="1.5"/><circle cx="147.1" cy="12.3" r="1.5"/></g><path d="M149,10.7 L156,12.2 L156,13.2 L149,12.4 Z" fill="#4b6f9e" stroke="#4b6f9e" stroke-width="0.8"/><g stroke="#4b6f9e" fill="none" stroke-width="1.3"><circle cx="124.2" cy="28" r="1.5"/><circle cx="118" cy="32.4" r="1.5"/></g><path d="M121.6,25 L120.6,35.5" stroke="#4b6f9e" stroke-width="2"/><g stroke="#4b6f9e" fill="none" stroke-width="1.3"><circle cx="203.4" cy="9.2" r="1.5"/><circle cx="202.1" cy="12.3" r="1.5"/></g><path d="M204,10.7 L211,12.2 L211,13.2 L204,12.4 Z" fill="#4b6f9e" stroke="#4b6f9e" stroke-width="0.8"/><g stroke="#4b6f9e" fill="none" stroke-width="1.3"><circle cx="179.2" cy="28" r="1.5"/><circle cx="173" cy="32.4" r="1.5"/></g><path d="M176.6,25 L175.6,35.5" stroke="#4b6f9e" stroke-width="2"/><g stroke="#4b6f9e" fill="none" stroke-width="1.3"><circle cx="237.2" cy="28" r="1.5"/><circle cx="231" cy="32.4" r="1.5"/></g><path d="M234.6,25 L233.6,35.5" stroke="#4b6f9e" stroke-width="2"/><g stroke="#4b6f9e" fill="none" stroke-width="1.3"><circle cx="37.4" cy="47.2" r="1.5"/><circle cx="36.1" cy="50.3" r="1.5"/></g><path d="M38,48.7 L45,50.2 L45,51.2 L38,50.4 Z" fill="#4b6f9e" stroke="#4b6f9e" stroke-width="0.8"/><g stroke="#4b6f9e" fill="none" stroke-width="1.3"><circle cx="13.2" cy="66" r="1.5"/><circle cx="7" cy="70.4" r="1.5"/></g><path d="M10.6,63 L9.6,73.5" stroke="#4b6f9e" stroke-width="2"/><g stroke="#4b6f9e" fill="none" stroke-width="1.3"><circle cx="92.4" cy="47.2" r="1.5"/><circle cx="91.1" cy="50.3" r="1.5"/></g><path d="M93,48.7 L100,50.2 L100,51.2 L93,50.4 Z" fill="#4b6f9e" stroke="#4b6f9e" stroke-width="0.8"/><g stroke="#4b6f9e" fill="none" stroke-width="1.3"><circle cx="68.2" cy="66" r="1.5"/><circle cx="62" cy="70.4" r="1.5"/></g><path d="M65.6,63 L64.6,73.5" stroke="#4b6f9e" stroke-width="2"/><g stroke="#4b6f9e" fill="none" stroke-width="1.3"><circle cx="148.4" cy="47.2" r="1.5"/><circle cx="147.1" cy="50.3" r="1.5"/></g><path d="M149,48.7 L156,50.2 L156,51.2 L149,50.4 Z" fill="#4b6f9e" stroke="#4b6f9e" stroke-width="0.8"/><g stroke="#4b6f9e" fill="none" stroke-width="1.3"><circle cx="124.2" cy="66" r="1.5"/><circle cx="118" cy="70.4" r="1.5"/></g><path d="M121.6,63 L120.6,73.5" stroke="#4b6f9e" stroke-width="2"/><g stroke="#4b6f9e" fill="none" stroke-width="1.3"><circle cx="203.4" cy="47.2" r="1.5"/><circle cx="202.1" cy="50.3" r="1.5"/></g><path d="M204,48.7 L211,50.2 L211,51.2 L204,50.4 Z" fill="#4b6f9e" stroke="#4b6f9e" stroke-width="0.8"/><g stroke="#4b6f9e" fill="none" stroke-width="1.3"><circle cx="179.2" cy="66" r="1.5"/><circle cx="173" cy="70.4" r="1.5"/></g><path d="M176.6,63 L175.6,73.5" stroke="#4b6f9e" stroke-width="2"/><g stroke="#4b6f9e" fill="none" stroke-width="1.3"><circle cx="237.2" cy="66" r="1.5"/><circle cx="231" cy="70.4" r="1.5"/></g><path d="M234.6,63 L233.6,73.5" stroke="#4b6f9e" stroke-width="2"/><g stroke="#4b6f9e" fill="none" stroke-width="1.3"><circle cx="37.4" cy="85.2" r="1.5"/><circle cx="36.1" cy="88.3" r="1.5"/></g><path d="M38,86.7 L45,88.2 L45,89.2 L38,88.4 Z" fill="#4b6f9e" stroke="#4b6f9e" stroke-width="0.8"/><g stroke="#4b6f9e" fill="none" stroke-width="1.3"><circle cx="13.2" cy="104" r="1.5"/><circle cx="7" cy="108.4" r="1.5"/></g><path d="M10.6,101 L9.6,111.5" stroke="#4b6f9e" stroke-width="2"/><g stroke="#4b6f9e" fill="none" stroke-width="1.3"><circle cx="92.4" cy="85.2" r="1.5"/><circle cx="91.1" cy="88.3" r="1.5"/></g><path d="M93,86.7 L100,88.2 L100,89.2 L93,88.4 Z" fill="#4b6f9e" stroke="#4b6f9e" stroke-width="0.8"/><g stroke="#4b6f9e" fill="none" stroke-width="1.3"><circle cx="68.2" cy="104" r="1.5"/><circle cx="62" cy="108.4" r="1.5"/></g><path d="M65.6,101 L64.6,111.5" stroke="#4b6f9e" stroke-width="2"/><g stroke="#4b6f9e" fill="none" stroke-width="1.3"><circle cx="148.4" cy="85.2" r="1.5"/><circle cx="147.1" cy="88.3" r="1.5"/></g><path d="M149,86.7 L156,88.2 L156,89.2 L149,88.4 Z" fill="#4b6f9e" stroke="#4b6f9e" stroke-width="0.8"/><g stroke="#4b6f9e" fill="none" stroke-width="1.3"><circle cx="124.2" cy="104" r="1.5"/><circle cx="118" cy="108.4" r="1.5"/></g><path d="M121.6,101 L120.6,111.5" stroke="#4b6f9e" stroke-width="2"/><g stroke="#4b6f9e" fill="none" stroke-width="1.3"><circle cx="203.4" cy="85.2" r="1.5"/><circle cx="202.1" cy="88.3" r="1.5"/></g><path d="M204,86.7 L211,88.2 L211,89.2 L204,88.4 Z" fill="#4b6f9e" stroke="#4b6f9e" stroke-width="0.8"/><g stroke="#4b6f9e" fill="none" stroke-width="1.3"><circle cx="179.2" cy="104" r="1.5"/><circle cx="173" cy="108.4" r="1.5"/></g><path d="M176.6,101 L175.6,111.5" stroke="#4b6f9e" stroke-width="2"/><g stroke="#4b6f9e" fill="none" stroke-width="1.3"><circle cx="237.2" cy="104" r="1.5"/><circle cx="231" cy="108.4" r="1.5"/></g><path d="M234.6,101 L233.6,111.5" stroke="#4b6f9e" stroke-width="2"/><g stroke="#4b6f9e" fill="none" stroke-width="1.3"><circle cx="37.4" cy="123.2" r="1.5"/><circle cx="36.1" cy="126.3" r="1.5"/></g><path d="M38,124.7 L45,126.2 L45,127.2 L38,126.4 Z" fill="#4b6f9e" stroke="#4b6f9e" stroke-width="0.8"/><g stroke="#4b6f9e" fill="none" stroke-width="1.3"><circle cx="13.2" cy="142" r="1.5"/><circle cx="7" cy="146.4" r="1.5"/></g><path d="M10.6,139 L9.6,149.5" stroke="#4b6f9e" stroke-width="2"/><g stroke="#4b6f9e" fill="none" stroke-width="1.3"><circle cx="92.4" cy="123.2" r="1.5"/><circle cx="91.1" cy="126.3" r="1.5"/></g><path d="M93,124.7 L100,126.2 L100,127.2 L93,126.4 Z" fill="#4b6f9e" stroke="#4b6f9e" stroke-width="0.8"/><g stroke="#4b6f9e" fill="none" stroke-width="1.3"><circle cx="68.2" cy="142" r="1.5"/><circle cx="62" cy="146.4" r="1.5"/></g><path d="M65.6,139 L64.6,149.5" stroke="#4b6f9e" stroke-width="2"/><g stroke="#4b6f9e" fill="none" stroke-width="1.3"><circle cx="148.4" cy="123.2" r="1.5"/><circle cx="147.1" cy="126.3" r="1.5"/></g><path d="M149,124.7 L156,126.2 L156,127.2 L149,126.4 Z" fill="#4b6f9e" stroke="#4b6f9e" stroke-width="0.8"/><g stroke="#4b6f9e" fill="none" stroke-width="1.3"><circle cx="124.2" cy="142" r="1.5"/><circle cx="118" cy="146.4" r="1.5"/></g><path d="M121.6,139 L120.6,149.5" stroke="#4b6f9e" stroke-width="2"/><g stroke="#4b6f9e" fill="none" stroke-width="1.3"><circle cx="203.4" cy="123.2" r="1.5"/><circle cx="202.1" cy="126.3" r="1.5"/></g><path d="M204,124.7 L211,126.2 L211,127.2 L204,126.4 Z" fill="#4b6f9e" stroke="#4b6f9e" stroke-width="0.8"/><g stroke="#4b6f9e" fill="none" stroke-width="1.3"><circle cx="179.2" cy="142" r="1.5"/><circle cx="173" cy="146.4" r="1.5"/></g><path d="M176.6,139 L175.6,149.5" stroke="#4b6f9e" stroke-width="2"/><g stroke="#4b6f9e" fill="none" stroke-width="1.3"><circle cx="237.2" cy="142" r="1.5"/><circle cx="231" cy="146.4" r="1.5"/></g><path d="M234.6,139 L233.6,149.5" stroke="#4b6f9e" stroke-width="2"/><g stroke="#4b6f9e" fill="none" stroke-width="1.3"><circle cx="37.4" cy="161.2" r="1.5"/><circle cx="36.1" cy="164.3" r="1.5"/></g><path d="M38,162.7 L45,164.2 L45,165.2 L38,164.4 Z" fill="#4b6f9e" stroke="#4b6f9e" stroke-width="0.8"/><g stroke="#4b6f9e" fill="none" stroke-width="1.3"><circle cx="92.4" cy="161.2" r="1.5"/><circle cx="91.1" cy="164.3" r="1.5"/></g><path d="M93,162.7 L100,164.2 L100,165.2 L93,164.4 Z" fill="#4b6f9e" stroke="#4b6f9e" stroke-width="0.8"/><g stroke="#4b6f9e" fill="none" stroke-width="1.3"><circle cx="148.4" cy="161.2" r="1.5"/><circle cx="147.1" cy="164.3" r="1.5"/></g><path d="M149,162.7 L156,164.2 L156,165.2 L149,164.4 Z" fill="#4b6f9e" stroke="#4b6f9e" stroke-width="0.8"/><g stroke="#4b6f9e" fill="none" stroke-width="1.3"><circle cx="203.4" cy="161.2" r="1.5"/><circle cx="202.1" cy="164.3" r="1.5"/></g><path d="M204,162.7 L211,164.2 L211,165.2 L204,164.4 Z" fill="#4b6f9e" stroke="#4b6f9e" stroke-width="0.8"/></svg>
<div class="a" style="left:791px;top:702px;width:108px;height:54px;background:#f2f1e6;border-style:solid;border-width:2px;border-color:#e4e0c4 #8a8670 #8a8670 #e4e0c4"></div>
<div class="t" style="left:791px;top:723px;width:108px;text-align:center;font-size:12px;font-weight:bold;color:#0c2a66;line-height:14px;letter-spacing:0">OK</div>
<div class="a" style="left:904px;top:702px;width:108px;height:54px;background:#f2f1e6;border-style:solid;border-width:2px;border-color:#e4e0c4 #8a8670 #8a8670 #e4e0c4"></div>
<div class="t" style="left:904px;top:723px;width:108px;text-align:center;font-size:12px;font-weight:bold;color:#0c2a66;line-height:14px;letter-spacing:0">Anulowanie</div>
</body></html>
